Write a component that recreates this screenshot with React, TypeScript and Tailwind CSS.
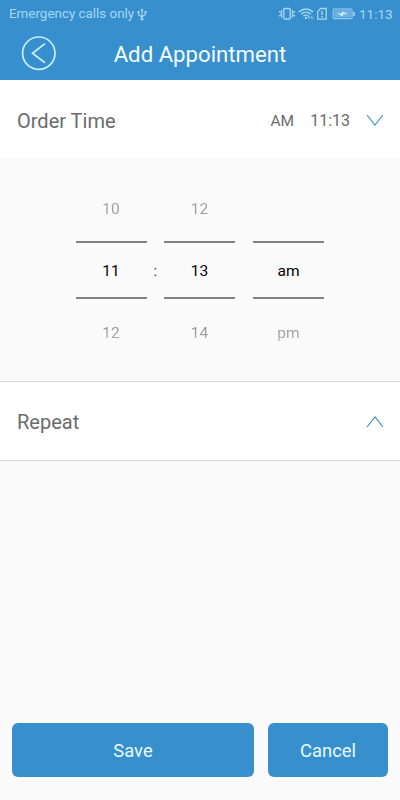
import React from "react";

type ColumnProps = { before: string; value: string; after: string };

function PickerColumn({ before, value, after }: ColumnProps) {
  return (
    <div className="flex w-[71px] flex-col text-center text-[15.5px] leading-[20px]">
      <div className="h-[42px] bg-gradient-to-t from-[#8e8e8e] to-[#a4a4a4] bg-clip-text text-transparent">{before}</div>
      <div className="flex h-[58px] items-center justify-center border-y-2 border-[#838181] pt-px text-black">{value}</div>
      <div className="mt-[24px] h-[24px] bg-gradient-to-b from-[#858585] to-[#c4c4c4] bg-clip-text text-transparent">{after}</div>
    </div>
  );
}

function Chevron({ up = false }: { up?: boolean }) {
  return (
    <svg className="mt-[2px]" width="18" height="12" viewBox="0 0 18 12" fill="none" stroke="#3c93bd" strokeWidth="1.2">
      <path d={up ? "M1 11 9 1 17 11" : "M1 1 9 11 17 1"} />
    </svg>
  );
}

function UsbIcon() {
  return (
    <svg className="ml-[3px]" width="10" height="13" viewBox="0 0 10 13" fill="none" stroke="currentColor" strokeWidth="1.2">
      <path d="M5 11V2M1.5 4.5v2.3L5 9M8.5 4v2.5L5 8.7" />
      <path d="M3.3 2.7 5 .3l1.7 2.4zM.5 3.1h2v2h-2zM7.5 3.1h2v2h-2z" fill="currentColor" stroke="none" />
      <circle cx="5" cy="11.2" r="1.4" fill="currentColor" stroke="none" />
    </svg>
  );
}

function StatusIcons() {
  return (
    <svg width="76" height="14" viewBox="0 0 76 14" fill="none" stroke="currentColor" strokeWidth="1.3">
      <rect x="4.8" y="1.5" width="6.4" height="10.5" rx="1" />
      <path d="M2.7 3v1.5l-.8 1 .8 1.2-.8 1.2.8 1.1v1.8M.5 4v1.5M.5 8v1.5M13.3 3v1.5l.8 1-.8 1.2.8 1.2-.8 1.1v1.8M15.5 4v1.5M15.5 8v1.5" />
      <path d="M20 4.9Q27 -1 34 4.9M22.2 7.1Q27 3.1 31.8 7.1M24.3 9.2Q27 7.1 29.3 9" strokeWidth="1.4" />
      <circle cx="27" cy="11" r="1.2" fill="currentColor" stroke="none" />
      <path d="M30.2 12V9m-1.3 1.2L30.2 9M32.8 9v3m1.2-1.2L32.8 12" strokeWidth=".9" />
      <path d="M41.6 1.5h5.6v10.6h-8.5V4.4z" />
      <path d="M43 4v4M43 9.1v1.3" strokeWidth="1.4" />
      <rect x="54.2" y="2" width="18.8" height="9.7" rx=".8" strokeWidth="1" />
      <rect x="55.5" y="3.2" width="16.2" height="7.3" fill="currentColor" opacity=".5" stroke="none" />
      <path d="m58.5 6.5 4.5-.2V4.2l5.5 2.9-4.5.2v2.2z" fill="#cdeeff" stroke="none" />
      <path d="M75 5v4" strokeWidth="1.6" />
    </svg>
  );
}

export default function App() {
  return (
    <div className="flex h-[800px] w-[400px] flex-col overflow-hidden bg-[#fafafa] font-['Roboto',sans-serif]">
      <header className="h-[80px] bg-[#388fce]">
        <div className="flex h-[28px] items-center pl-[9px] pr-[8px] text-[#a6d7f5]">
          <span className="w-[125px] text-[13.4px] leading-[16px] whitespace-nowrap">Emergency calls only</span>
          <UsbIcon />
          <div className="ml-auto flex items-center">
            <StatusIcons />
            <span className="ml-[4px] w-[33px] text-[13.5px] leading-[16px]">11:13</span>
          </div>
        </div>
        <div className="grid h-[52px] grid-cols-[1fr_auto_1fr] items-center px-[21px]">
          <svg width="35" height="35" viewBox="0 0 35 35" className="mb-[2px]" fill="none" stroke="#c8efff" strokeWidth="1.7">
            <circle cx="17.8" cy="17.2" r="16.2" />
            <path d="M24 7.7 11.5 17.3 24 26.8" />
          </svg>
          <h1 className="text-[22.2px] leading-[28px] text-[#f4fdff]">Add Appointment</h1>
        </div>
      </header>

      <section className="flex h-[78px] items-center bg-white pl-[17px] pr-[16px] text-[#6b6b6b]">
        <h2 className="pt-[3px] text-[20px] leading-[24px]">Order Time</h2>
        <div className="ml-auto flex items-center">
          <span className="pt-[4px] text-[15.5px] leading-[20px]">AM</span>
          <span className="ml-[16px] mr-[16px] pt-[4px] text-[16px] leading-[20px]">11:13</span>
          <Chevron />
        </div>
      </section>

      <section className="flex h-[223px] pl-[75.5px] pt-[41px]">
        <PickerColumn before="10" value="11" after="12" />
        <div className="w-[17.5px] pt-[62px] text-center text-[15px] leading-[20px] text-[#333]">:</div>
        <PickerColumn before="12" value="13" after="14" />
        <div className="w-[18px]" />
        <PickerColumn before="" value="am" after="pm" />
      </section>

      <section className="flex h-[80px] items-center border-y border-[#d9d9d9] bg-white pl-[17px] pr-[16px] text-[#6b6b6b]">
        <h2 className="pt-[2px] text-[20px] leading-[24px]">Repeat</h2>
        <div className="ml-auto"><Chevron up /></div>
      </section>

      <footer className="mt-auto flex justify-between px-[12px] pb-[23px] text-[18.4px] text-[#e9faff]">
        <button className="h-[54px] w-[242px] rounded-[6px] bg-[#388fce] pt-[2px]">Save</button>
        <button className="h-[54px] w-[120px] rounded-[6px] bg-[#388fce] pt-[2px]">Cancel</button>
      </footer>
    </div>
  );
}
